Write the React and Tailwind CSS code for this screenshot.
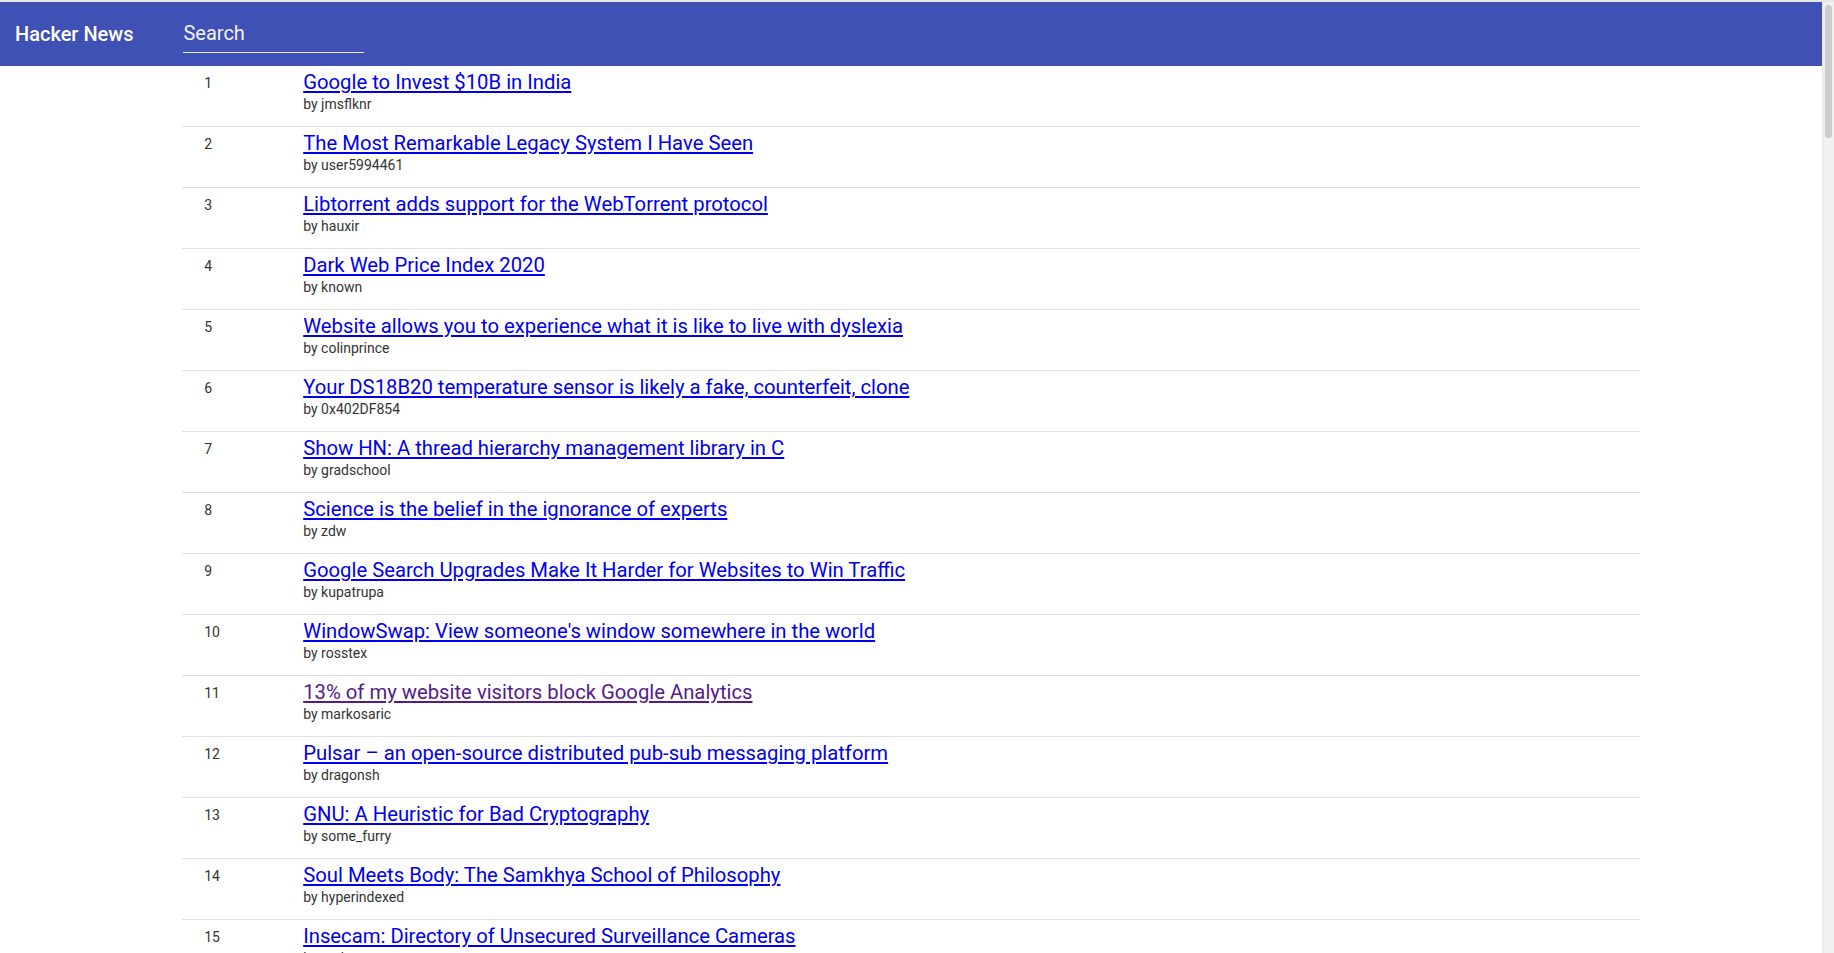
const STORIES = [
  { title: 'Google to Invest $10B in India', by: 'jmsflknr' },
  { title: 'The Most Remarkable Legacy System I Have Seen', by: 'user5994461' },
  { title: 'Libtorrent adds support for the WebTorrent protocol', by: 'hauxir' },
  { title: 'Dark Web Price Index 2020', by: 'known' },
  { title: 'Website allows you to experience what it is like to live with dyslexia', by: 'colinprince' },
  { title: 'Your DS18B20 temperature sensor is likely a fake, counterfeit, clone', by: '0x402DF854' },
  { title: 'Show HN: A thread hierarchy management library in C', by: 'gradschool' },
  { title: 'Science is the belief in the ignorance of experts', by: 'zdw' },
  { title: 'Google Search Upgrades Make It Harder for Websites to Win Traffic', by: 'kupatrupa' },
  { title: "WindowSwap: View someone's window somewhere in the world", by: 'rosstex' },
  { title: '13% of my website visitors block Google Analytics', by: 'markosaric', visited: true },
  { title: 'Pulsar – an open-source distributed pub-sub messaging platform', by: 'dragonsh' },
  { title: 'GNU: A Heuristic for Bad Cryptography', by: 'some_furry' },
  { title: 'Soul Meets Body: The Samkhya School of Philosophy', by: 'hyperindexed' },
  { title: 'Insecam: Directory of Unsecured Surveillance Cameras', by: 'tosh' },
  { title: 'The Cost of JavaScript Frameworks', by: 'feross' },
]

export default function App() {
  return (
    <div className="h-screen flex flex-col overflow-hidden bg-white font-['Roboto','Liberation_Sans',sans-serif]">
      <div className="h-[2px] bg-[#e6e6e6] shrink-0" />
      <div className="flex flex-1 min-h-0">
        <div className="flex-1 min-w-0 overflow-hidden">
          {/* App bar */}
          <header className="h-16 bg-[#3f51b5] flex items-center px-4 text-white">
            <h1 className="text-[20px] font-medium leading-none -ml-px">Hacker News</h1>
            <div className="ml-[50px] mt-[5px] w-[181px] border-b border-white/90 pb-[5px]">
              <input
                className="w-full bg-transparent outline-none text-[20px] leading-6 text-white placeholder:text-white/95"
                placeholder="Search"
              />
            </div>
          </header>

          {/* Story list */}
          <ul className="w-4/5 mx-auto">
            {STORIES.map((s, i) => (
              <li key={i} className="flex pt-1 pb-3 pl-[22px] border-b border-[#e0e0e0]">
                <span className="w-[99px] shrink-0 mt-[3px] text-sm leading-5 text-[#333]">{i + 1}</span>
                <div className="min-w-0">
                  <a
                    href="#"
                    className={`block text-[20.25px] leading-6 underline ${s.visited ? 'text-[#551a8b]' : 'text-[#0000ee]'}`}
                  >
                    {s.title}
                  </a>
                  <div className="text-sm leading-5 text-[#333]">by {s.by}</div>
                </div>
              </li>
            ))}
          </ul>
        </div>

        {/* scrollbar */}
        <div className="w-3 shrink-0 bg-[#f1f1f1] border-l border-[#e8e8e8] pt-[3px] px-[2px]">
          <div className="h-[133px] rounded-full bg-[#cdcdcd]" />
        </div>
      </div>
    </div>
  )
}
